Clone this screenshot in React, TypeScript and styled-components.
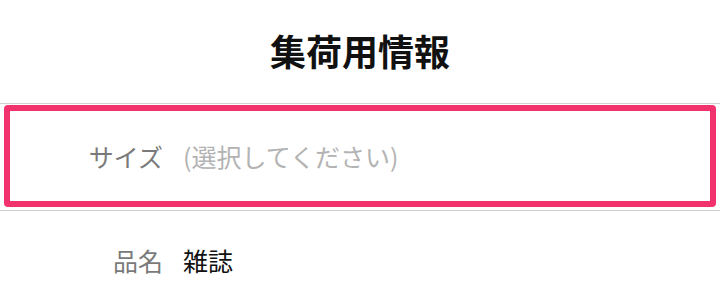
import React from "react";
import styled, { createGlobalStyle } from "styled-components";

const Global = createGlobalStyle`
  html, body { margin: 0; padding: 0; background: #ffffff; }
  body { font-family: "Noto Sans CJK JP", "Noto Sans", sans-serif; }
`;

const Page = styled.div`
  width: 720px;
  display: flex;
  flex-direction: column;
`;

const Header = styled.h1`
  margin: 0;
  height: 103px;
  display: flex;
  align-items: center;
  justify-content: center;
  padding-bottom: 4px;
  box-sizing: border-box;
  font-size: 36px;
  font-weight: 700;
  color: #111111;
  letter-spacing: 0;
`;

const Section = styled.div`
  border-top: 1px solid #cfcfcf;
  border-bottom: 1px solid #cfcfcf;
  padding: 1px 4px 3px;
`;

const FocusBox = styled.div`
  height: 90px;
  border: 6px solid #f2326c;
  border-radius: 4px;
  display: flex;
  align-items: center;
`;

const Row = styled.div<{ $inset?: number; $height?: number }>`
  display: flex;
  align-items: center;
  gap: 20px;
  padding-left: ${(p) => p.$inset ?? 0}px;
  height: ${(p) => (p.$height ? `${p.$height}px` : "auto")};
`;

const Label = styled.span`
  width: 153px;
  text-align: right;
  font-size: 25px;
  color: #7a7a7a;
  line-height: 1;
`;

const Value = styled.span<{ $placeholder?: boolean }>`
  font-size: 25px;
  line-height: 1;
  color: ${(p) => (p.$placeholder ? "#b3b3b3" : "#111111")};
`;

export default function App() {
  return (
    <Page>
      <Global />
      <Header>集荷用情報</Header>
      <Section>
        <FocusBox>
          <Row>
            <Label>サイズ</Label>
            <Value $placeholder>(選択してください)</Value>
          </Row>
        </FocusBox>
      </Section>
      <Row $inset={10} $height={98}>
        <Label>品名</Label>
        <Value>雑誌</Value>
      </Row>
    </Page>
  );
}
